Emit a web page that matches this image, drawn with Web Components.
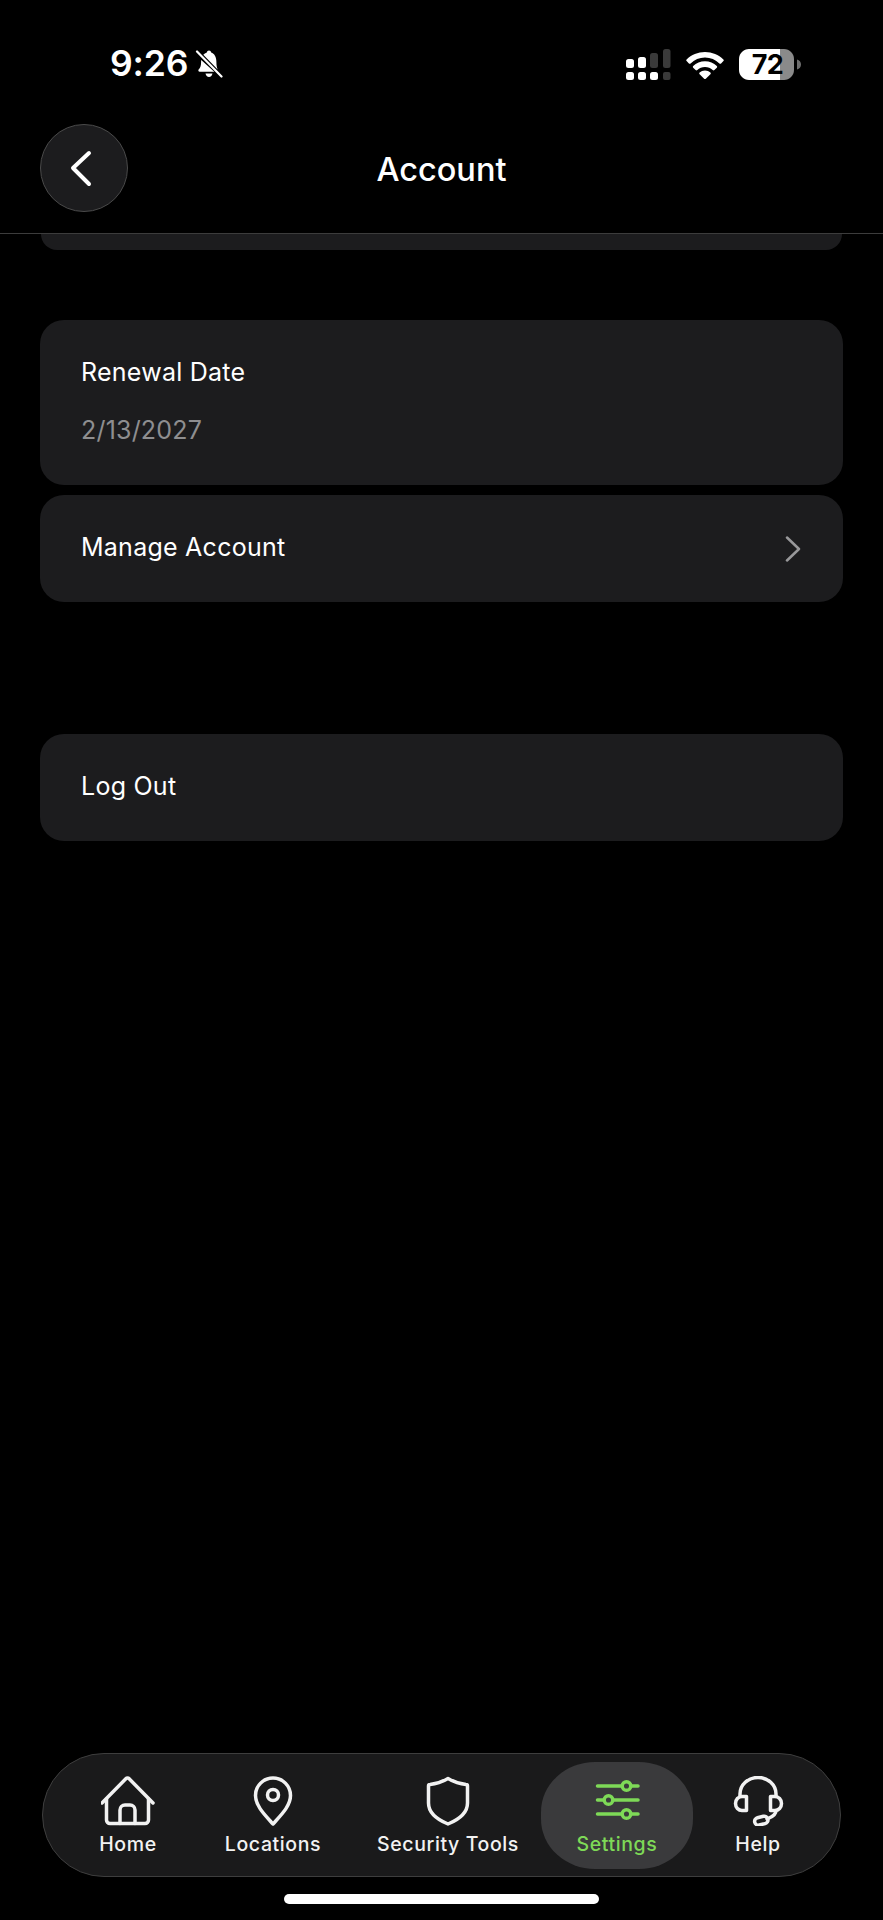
<!DOCTYPE html>
<html>
<head>
<meta charset="utf-8">
<title>Account</title>
<style>
  html, body { margin: 0; padding: 0; background: #000; }
  body { width: 883px; height: 1920px; overflow: hidden; font-family: Inter, "Liberation Sans", sans-serif; color: #fff; }
  #app { display: flex; flex-direction: column; height: 1920px; }
  #content { flex: 1; display: flex; flex-direction: column; }
  #first-group { margin-top: 70px; display: flex; flex-direction: column; gap: 10px; }
  #second-group { margin-top: 132px; }
</style>
</head>
<body>
<div id="app">
  <status-bar></status-bar>
  <nav-header title="Account"></nav-header>
  <div id="content">
    <scrolled-edge></scrolled-edge>
    <div id="first-group">
      <info-card label="Renewal Date" value="2/13/2027"></info-card>
      <link-row label="Manage Account" chevron></link-row>
    </div>
    <div id="second-group">
      <link-row label="Log Out"></link-row>
    </div>
  </div>
  <tab-bar></tab-bar>
  <home-indicator></home-indicator>
</div>

<script>
const statusTemplate = document.createElement('template');
statusTemplate.innerHTML = `
  <style>
    :host { display: flex; height: 124px; box-sizing: border-box; padding: 0 81px 0 110px; justify-content: space-between; align-items: flex-start; }
    .left { display: flex; align-items: center; margin-top: 42px; gap: 7px; }
    .time { font-size: 35.5px; font-weight: 600; line-height: 44px; letter-spacing: -.1px; }
    .right { display: flex; align-items: flex-start; margin-top: 49px; }
    svg { display: block; }
    .wifi { margin: 3px 15px 0 15px; }
    .battery { position: relative; width: 63px; height: 31px; }
    .pct { position: absolute; left: 0; top: 0; width: 57px; height: 31px; text-align: center; color: #000; font-size: 27px; font-weight: 700; line-height: 31px; letter-spacing: -0.5px; }
  </style>
  <div class="left">
    <span class="time">9:26</span>
    <svg width="28" height="30" viewBox="0 0 28 30">
      <path d="M14 1.500c-1.200 0-2 .8-2.200 2-1.400.4-2.600 1.200-3.500 2.300l14.400 14.600c-.9-1.900-1.300-4.200-1.300-7.700 0-4.700-2.100-8.200-5.200-9.200-.2-1.200-1-2-2.200-2zM6.200 11c-.1.600-.1 1.200-.1 1.900 0 4.100-1 6-2.300 7.400-.9 1-.4 2.500 1 2.500h14.500z" fill="#fff"/>
      <path d="M10.500 24.500c.3 2 1.700 3.400 3.500 3.400s3.200-1.400 3.500-3.400z" fill="#fff"/>
      <path d="M2 2.500 26.500 27.500" stroke="#fff" stroke-width="2.200" stroke-linecap="round"/>
    </svg>
  </div>
  <div class="right">
    <svg width="45" height="31" viewBox="0 0 45 31">
      <g fill="#3a3a3a">
        <rect x="24" y="4" width="8" height="15" rx="2.500"/>
        <rect x="37" y="0" width="7.500" height="19" rx="2.500"/>
        <rect x="37" y="23" width="7.500" height="8" rx="2"/>
      </g>
      <g fill="#fff">
        <rect x="0" y="10" width="8" height="9" rx="2.500"/>
        <rect x="12" y="8" width="8" height="11" rx="2.500"/>
        <rect x="0" y="23" width="8" height="8" rx="2.500"/>
        <rect x="12" y="23" width="8" height="8" rx="2.500"/>
        <rect x="24" y="23" width="8" height="8" rx="2.500"/>
      </g>
    </svg>
    <svg class="wifi" width="38" height="27" viewBox="0 0 38 27">
      <path d="M19 0C11.800 0 5.400 2.800.6 7.400c-.5.500-.5 1.200 0 1.700l2.300 2.300c.5.500 1.200.5 1.700 0C8.400 7.800 13.400 5.500 19 5.500s10.600 2.300 14.400 5.900c.5.500 1.200.5 1.700 0l2.300-2.300c.5-.5.500-1.200 0-1.700C32.600 2.800 26.200 0 19 0z" fill="#fff"/>
      <path d="M19 9.300c-4.600 0-8.700 1.800-11.800 4.700-.5.500-.5 1.200 0 1.700l2.400 2.400c.5.500 1.200.5 1.700 0 2-1.800 4.700-3 7.700-3s5.700 1.200 7.700 3c.5.500 1.200.5 1.700 0l2.400-2.400c.5-.5.500-1.200 0-1.700-3.100-2.900-7.200-4.700-11.800-4.700z" fill="#fff"/>
      <path d="M19 18.500c-2.100 0-4 .8-5.400 2.100-.5.500-.5 1.200 0 1.700l4.500 4.400c.5.400 1.200.4 1.700 0l4.600-4.400c.5-.5.500-1.200 0-1.700-1.400-1.300-3.300-2.100-5.400-2.100z" fill="#fff"/>
    </svg>
    <div class="battery">
      <svg width="63" height="31" viewBox="0 0 63 31">
        <path d="M10 0H41V31H10C4.500 31 0 26.500 0 21V10C0 4.500 4.500 0 10 0z" fill="#fff"/>
        <path d="M41 0H45C50.500 0 55 4.500 55 10V21C55 26.500 50.500 31 45 31H41z" fill="#8a8a8a"/>
        <path d="M58 10.500c2.500.6 4 2.500 4 5s-1.500 4.400-4 5z" fill="#6e6e6e"/>
      </svg>
      <span class="pct">72</span>
    </div>
  </div>
`;
class StatusBar extends HTMLElement {
  constructor() {
    super();
    this.attachShadow({ mode: 'open' });
    this.shadowRoot.appendChild(statusTemplate.content.cloneNode(true));
  }
}
customElements.define('status-bar', StatusBar);

const headerTemplate = document.createElement('template');
headerTemplate.innerHTML = `
  <style>
    :host { display: grid; grid-template-columns: 88px 1fr 88px; align-items: center; height: 110px; box-sizing: border-box; padding: 0 40px 21px; border-bottom: 1px solid #3c3c3c; }
    .back { width: 88px; height: 88px; box-sizing: border-box; border-radius: 50%; background: #1c1c1e; border: 1px solid #4a4a4a; display: flex; align-items: center; justify-content: center; }
    svg { display: block; }
    h1 { margin: 4px 0 0; text-align: center; font-size: 32.5px; font-weight: 500; line-height: 40px; color: #fff; }
  </style>
  <div class="back">
    <svg width="44" height="44" viewBox="0 0 44 44" fill="none" stroke="#fff" stroke-width="4" stroke-linecap="round" stroke-linejoin="round">
      <path d="M27 7 11 22 27 38"/>
    </svg>
  </div>
  <h1></h1>
`;
class NavHeader extends HTMLElement {
  constructor() {
    super();
    this.attachShadow({ mode: 'open' });
    this.shadowRoot.appendChild(headerTemplate.content.cloneNode(true));
  }
  connectedCallback() {
    this.shadowRoot.querySelector('h1').textContent = this.getAttribute('title');
  }
}
customElements.define('nav-header', NavHeader);

class ScrolledEdge extends HTMLElement {
  constructor() {
    super();
    this.attachShadow({ mode: 'open' });
    this.shadowRoot.innerHTML = `
      <style>
        :host { display: block; height: 16px; margin: 0 41px; background: #1c1c1e; border-radius: 0 0 20px 20px; }
      </style>
    `;
  }
}
customElements.define('scrolled-edge', ScrolledEdge);

const cardStyle = `
  :host { display: block; margin: 0 40px; background: #1c1c1e; border-radius: 24px; }
  .label { font-size: 25px; line-height: 30px; letter-spacing: .25px; color: #fff; }
`;

class InfoCard extends HTMLElement {
  constructor() {
    super();
    this.attachShadow({ mode: 'open' });
    this.shadowRoot.innerHTML = `
      <style>
        ${cardStyle}
        :host { height: 165px; box-sizing: border-box; padding: 37px 41px 0; }
        .value { margin-top: 28px; font-size: 25px; line-height: 30px; letter-spacing: .2px; color: #8e8e90; }
      </style>
      <div class="label"></div>
      <div class="value"></div>
    `;
  }
  connectedCallback() {
    this.shadowRoot.querySelector('.label').textContent = this.getAttribute('label');
    this.shadowRoot.querySelector('.value').textContent = this.getAttribute('value');
  }
}
customElements.define('info-card', InfoCard);

class LinkRow extends HTMLElement {
  constructor() {
    super();
    this.attachShadow({ mode: 'open' });
  }
  connectedCallback() {
    const chevron = this.hasAttribute('chevron') ? `
      <svg width="16" height="26" viewBox="0 0 16 26" fill="none" stroke="#98989a" stroke-width="2.500" stroke-linecap="round" stroke-linejoin="round">
        <path d="M2 1.500 14 13 2 24.500"/>
      </svg>` : '';
    this.shadowRoot.innerHTML = `
      <style>
        ${cardStyle}
        :host { height: 107px; box-sizing: border-box; padding: 0 42px 4px 41px; display: flex; align-items: center; justify-content: space-between; }
        svg { display: block; margin-top: 4px; }
      </style>
      <div class="label"></div>
      ${chevron}
    `;
    this.shadowRoot.querySelector('.label').textContent = this.getAttribute('label');
  }
}
customElements.define('link-row', LinkRow);

const tabIcons = {
  home: `<path d="M1 27 24.800 2.800a2.400 2.400 0 0 1 3.400 0L52 27"/><path d="M5.500 23V44a3.500 3.500 0 0 0 3.500 3.500h35a3.500 3.500 0 0 0 3.500-3.500V23"/><path d="M19 47.500V34a5 5 0 0 1 5-5h5a5 5 0 0 1 5 5V47.500"/>`,
  pin: `<path d="M27 48 C19 39 9.500 30 9.500 19.500 A17.500 17.500 0 0 1 44.500 19.500 C44.500 30 35 39 27 48Z"/><circle cx="27" cy="19" r="5.500"/>`,
  shield: `<path d="M27 2.500 C33 6 38.500 8 45 8.500 A1.500 1.500 0 0 1 46.500 10 V27 C46.500 36.500 38 43.500 27 48 C16 43.500 7.500 36.500 7.500 27 V10 A1.500 1.500 0 0 1 9 8.500 C15.500 8 21 6 27 2.500Z"/>`,
  sliders: `<path d="M7.500 10H31.500M41.500 10H48M7.500 24H13.500M23.500 24H48M7.500 38H31.500M41.500 38H48"/><circle cx="36.500" cy="10" r="4.300"/><circle cx="18.500" cy="24" r="4.300"/><circle cx="36.500" cy="38" r="4.300"/>`,
  help: `<path d="M9 20.500V18A18 16.500 0 0 1 45 18V20.500"/><path d="M15.500 20.500H11A6.500 7 0 0 0 11 34.500H15.500Z"/><path d="M39.500 20.500H44A6.500 7 0 0 1 44 34.500H39.500Z"/><path d="M45 34.500C45 40 39 41.500 36 43"/><rect x="23.500" y="41" width="13.500" height="7.500" rx="3.700" transform="rotate(-14 30 44.500)"/>`
};

class TabItem extends HTMLElement {
  constructor() {
    super();
    this.attachShadow({ mode: 'open' });
    this.shadowRoot.innerHTML = `
      <style>
        :host { display: flex; flex-direction: column; align-items: center; box-sizing: border-box; height: 107px; padding-top: 14px; color: #f2f2f2; border-radius: 54px / 50px; }
        :host([active]) { background: #3a3a3c; color: #7ed957; }
        svg { display: block; }
        span { margin-top: 5px; font-size: 19.500px; line-height: 26px; font-weight: 500; letter-spacing: .6px; white-space: nowrap; }
      </style>
      <svg width="54" height="50" viewBox="0 0 54 50" fill="none" stroke="currentColor" stroke-width="3.500" stroke-linecap="round" stroke-linejoin="round"></svg>
      <span><slot></slot></span>
    `;
  }
  connectedCallback() {
    this.shadowRoot.querySelector('svg').innerHTML = tabIcons[this.getAttribute('icon')];
  }
}
customElements.define('tab-item', TabItem);

class TabBar extends HTMLElement {
  constructor() {
    super();
    this.attachShadow({ mode: 'open' });
    this.shadowRoot.innerHTML = `
      <style>
        :host { display: grid; grid-template-columns: 126px 164px 186px 152px 130px; align-items: center; margin: 0 42px; box-sizing: border-box; height: 124px; padding: 0 18px 0 22px; background: #1a1a1b; border: 1px solid #3e3e3e; border-radius: 62px; }
      </style>
      <tab-item icon="home">Home</tab-item>
      <tab-item icon="pin">Locations</tab-item>
      <tab-item icon="shield">Security Tools</tab-item>
      <tab-item icon="sliders" active>Settings</tab-item>
      <tab-item icon="help">Help</tab-item>
    `;
  }
}
customElements.define('tab-bar', TabBar);

class HomeIndicator extends HTMLElement {
  constructor() {
    super();
    this.attachShadow({ mode: 'open' });
    this.shadowRoot.innerHTML = `
      <style>
        :host { display: block; height: 43px; box-sizing: border-box; padding: 17px 284px 16px; }
        div { height: 10px; background: #fff; border-radius: 5px; }
      </style>
      <div></div>
    `;
  }
}
customElements.define('home-indicator', HomeIndicator);
</script>
</body>
</html>
